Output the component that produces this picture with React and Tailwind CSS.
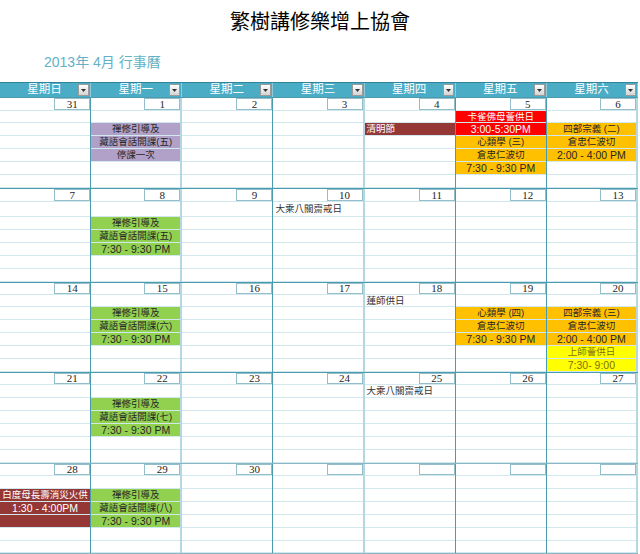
// 2013年4月 行事曆 (Excel 月曆樣式)
const FONT = { fontFamily: '"Liberation Sans", "Noto Sans CJK TC", sans-serif' };

const P = "bg-[#b1a0c7] text-[#262626] text-center";
const G = "bg-[#92d050] text-[#262626] text-center";
const O = "bg-[#ffc000] text-[#262626] text-center";
const R = "bg-[#ff0000] text-white text-center";
const D = "bg-[#953735] text-white text-center";
const DL = "bg-[#953735] text-white text-left pl-[2px]";
const Y = "bg-[#ffff00] text-[#7f7010] text-center";
const T = "text-[#333333] text-left pl-[2px]";

const greenClass = (n) => ({
  2: [G, "禪修引導及"],
  3: [G, `藏語會話開課(${n})`],
  4: [G, "7:30 - 9:30 PM", true],
});

const weeks = [
  {
    dates: [31, 1, 2, 3, 4, 5, 6],
    h: [13, 12, 13, 13, 13, 13, 13],
    ev: {
      1: { 2: [P, "禪修引導及"], 3: [P, "藏語會話開課(五)"], 4: [P, "停課一次"] },
      4: { 2: [DL, "清明節"] },
      5: {
        1: [R, "卡雀佛母薈供日"],
        2: [R, "3:00-5:30PM", true],
        3: [O, "心類學 (三)"],
        4: [O, "倉忠仁波切"],
        5: [O, "7:30 - 9:30 PM", true],
      },
      6: { 2: [O, "四部宗義 (二)"], 3: [O, "倉忠仁波切"], 4: [O, "2:00 - 4:00 PM", true] },
    },
  },
  {
    dates: [7, 8, 9, 10, 11, 12, 13],
    h: [13, 15, 13, 13, 13, 13, 13],
    ev: {
      1: greenClass("五"),
      3: { 1: [T, "大乘八關齋戒日"] },
    },
  },
  {
    dates: [14, 15, 16, 17, 18, 19, 20],
    h: [12, 12, 13, 13, 13, 13, 13],
    ev: {
      1: greenClass("六"),
      4: { 1: [T, "蓮師供日"] },
      5: { 2: [O, "心類學 (四)"], 3: [O, "倉忠仁波切"], 4: [O, "7:30 - 9:30 PM", true] },
      6: {
        2: [O, "四部宗義 (三)"],
        3: [O, "倉忠仁波切"],
        4: [O, "2:00 - 4:00 PM", true],
        5: [Y, "上師薈供日"],
        6: [Y, "7:30- 9:00", true],
      },
    },
  },
  {
    dates: [21, 22, 23, 24, 25, 26, 27],
    h: [12, 13, 13, 13, 13, 13, 13],
    ev: {
      1: greenClass("七"),
      4: { 1: [T, "大乘八關齋戒日"] },
    },
  },
  {
    dates: [28, 29, 30, "", "", "", ""],
    h: [12, 13, 13, 13, 13, 13, 12],
    ev: {
      0: { 2: [D, "白度母長壽消災火供"], 3: [D, "1:30 - 4:00PM", true], 4: [D, ""] },
      1: greenClass("八"),
    },
  },
];

const days = ["星期日", "星期一", "星期二", "星期三", "星期四", "星期五", "星期六"];

const colBorder = [
  "border-r border-[#4a9bb0]",
  "border-r-2 border-[#b3d8e2]",
  "border-r border-[#4a9bb0]",
  "border-r-2 border-[#b3d8e2]",
  "border-r border-[#4a9bb0]",
  "border-r border-[#4a9bb0]",
  "border-r-2 border-[#b3d8e2]",
];

function FilterButton() {
  return (
    <span className="flex h-[12px] w-[11px] shrink-0 items-center justify-center border border-[#9a9a9a] bg-gradient-to-b from-white to-[#d4d4d4]">
      <svg width="5" height="3" viewBox="0 0 5 3">
        <polygon points="0,0 5,0 2.5,3" fill="#333" />
      </svg>
    </span>
  );
}

function DayColumn({ date, heights, events, idx }) {
  return (
    <div className={`flex flex-col ${colBorder[idx]}`}>
      {heights.map((h, r) => {
        if (r === 0) {
          return (
            <div key={r} className="flex justify-end border-b border-[#d2e8ef]" style={{ height: h }}>
              <div className="flex w-[36px] items-center justify-center border border-[#94bfca] text-[11px] leading-none text-[#262626]" style={{ fontFamily: '"Liberation Serif", serif' }}>
                {date}
              </div>
            </div>
          );
        }
        const e = events && events[r];
        return (
          <div
            key={r}
            className={`overflow-hidden whitespace-nowrap border-b border-[#d2e8ef] ${e ? e[0] : ""} ${e && e[2] ? "text-[10.5px]" : "text-[9.5px]"}`}
            style={{ height: h, lineHeight: `${h - 1}px` }}
          >
            {e ? e[1] : ""}
          </div>
        );
      })}
    </div>
  );
}

export default function App() {
  return (
    <div className="h-[554px] w-[640px] overflow-hidden bg-white" style={FONT}>
      <div className="flex h-[44px] items-center justify-center text-[20px] text-black">
        繁樹講修樂增上協會
      </div>
      <div className="flex h-[38px] items-center pb-[2px] pl-[44px] text-[14px] text-[#63b1c6]">
        2013年 4月 行事曆
      </div>
      <div className="w-[638px]">
        <div className="grid h-[15px] grid-cols-7 border-t border-[#31849b] bg-[#4bacc6]">
          {days.map((d) => (
            <div key={d} className="flex items-center border-r border-[#8fcadb] pl-[11px] pr-[1px]">
              <span className="flex-1 text-center text-[11.5px] leading-none text-white">{d}</span>
              <FilterButton />
            </div>
          ))}
        </div>
        {weeks.map((w, wi) => (
          <div key={wi} className={`grid grid-cols-7 border-t border-[#4a9bb0] ${wi === weeks.length - 1 ? "border-b-2 border-[#8ab5c2]" : ""}`}>
            {w.dates.map((d, i) => (
              <DayColumn key={i} idx={i} date={d} heights={w.h} events={w.ev[i]} />
            ))}
          </div>
        ))}
      </div>
    </div>
  );
}
